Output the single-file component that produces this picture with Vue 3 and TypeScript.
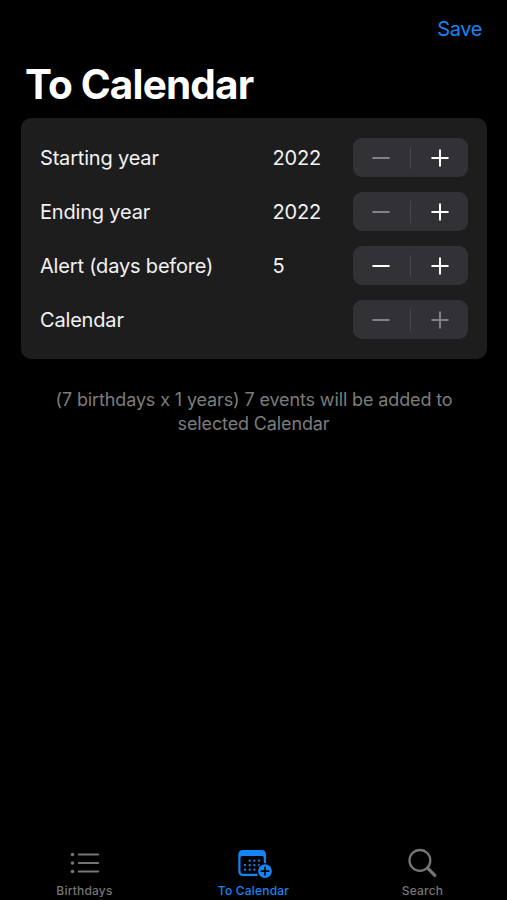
<script setup lang="ts">
import { computed, reactive, ref } from 'vue'

interface Row {
  label: string
  value: number | null
  min: number
}

const rows = reactive<Row[]>([
  { label: 'Starting year', value: 2022, min: 2022 },
  { label: 'Ending year', value: 2022, min: 2022 },
  { label: 'Alert (days before)', value: 5, min: 0 },
  { label: 'Calendar', value: null, min: 0 },
])

const birthdays = 7
const years = computed(() => (rows[1].value ?? 0) - (rows[0].value ?? 0) + 1)
const active = ref('To Calendar')

function canDecrease(row: Row): boolean {
  return row.value !== null && row.value > row.min
}

function step(row: Row, delta: number): void {
  if (row.value !== null) row.value += delta
}
</script>

<template>
  <div class="screen">
    <header class="nav">
      <button class="save">Save</button>
    </header>
    <h1 class="title">To Calendar</h1>

    <section class="card">
      <div v-for="row in rows" :key="row.label" class="row">
        <span class="label">{{ row.label }}</span>
        <span class="value">{{ row.value }}</span>
        <div class="stepper">
          <button class="step" :disabled="!canDecrease(row)" aria-label="Decrease" @click="step(row, -1)">
            <svg class="glyph" viewBox="0 0 18 18"><path d="M1.2 9H16.8" /></svg>
          </button>
          <span class="divider"></span>
          <button class="step" :disabled="row.value === null" aria-label="Increase" @click="step(row, 1)">
            <svg class="glyph" viewBox="0 0 18 18"><path d="M1.2 9H16.8M9 1.2V16.8" /></svg>
          </button>
        </div>
      </div>
    </section>

    <p class="note">
      <span class="line first">({{ birthdays }} birthdays x {{ years }} years) {{ birthdays * years }} events will be added to</span>
      <span class="line">selected Calendar</span>
    </p>

    <nav class="tabs">
      <button class="tab" :class="{ on: active === 'Birthdays' }" @click="active = 'Birthdays'">
        <svg class="icon" viewBox="0 0 36 32">
          <g fill="currentColor">
            <circle cx="5.5" cy="7.5" r="1.8" />
            <circle cx="5.5" cy="16" r="1.8" />
            <circle cx="5.5" cy="24.5" r="1.8" />
          </g>
          <path d="M11.8 7.5H31.2M11.8 16H31.2M11.8 24.5H31.2" fill="none" stroke="currentColor" stroke-width="2" stroke-linecap="round" />
        </svg>
        <span class="caption">Birthdays</span>
      </button>
      <button class="tab" :class="{ on: active === 'To Calendar' }" @click="active = 'To Calendar'">
        <svg class="icon" viewBox="0 0 36 32">
          <path
            fill="currentColor"
            fill-rule="evenodd"
            d="M7 3H25.3Q30 3 30 7.7V18.2A7.8 7.8 0 0 0 27.8 17.2V10.6Q27.8 9 26.2 9H6.1Q4.5 9 4.5 10.6V23.9Q4.5 26.8 7.4 26.8H21A7.8 7.8 0 0 0 22.2 29H7Q2.3 29 2.3 24.3V7.7Q2.3 3 7 3Z"
          />
          <g fill="currentColor">
            <circle cx="13.7" cy="13.7" r="1.15" /><circle cx="18.4" cy="13.7" r="1.15" /><circle cx="23.1" cy="13.7" r="1.15" />
            <circle cx="9" cy="18.2" r="1.15" /><circle cx="13.7" cy="18.2" r="1.15" /><circle cx="18.4" cy="18.2" r="1.15" /><circle cx="23.1" cy="18.2" r="1.15" />
            <circle cx="9" cy="22.7" r="1.15" /><circle cx="13.7" cy="22.7" r="1.15" /><circle cx="18.4" cy="22.7" r="1.15" />
          </g>
          <circle cx="29" cy="24.1" r="8.1" fill="#000" />
          <circle cx="29" cy="24.1" r="6.9" fill="currentColor" />
          <path d="M25.3 24.1H32.7M29 20.4V27.8" fill="none" stroke="#000" stroke-width="1.7" stroke-linecap="round" />
        </svg>
        <span class="caption">To Calendar</span>
      </button>
      <button class="tab" :class="{ on: active === 'Search' }" @click="active = 'Search'">
        <svg class="icon" viewBox="0 0 36 32">
          <circle cx="14.9" cy="13.4" r="10.4" fill="none" stroke="currentColor" stroke-width="2.3" />
          <path d="M22.5 21L29.8 28.3" fill="none" stroke="currentColor" stroke-width="3.2" stroke-linecap="round" />
        </svg>
        <span class="caption">Search</span>
      </button>
    </nav>
  </div>
</template>

<style>
body {
  background: #000;
}
</style>

<style scoped>
.screen {
  box-sizing: border-box;
  display: flex;
  flex-direction: column;
  height: 900px;
  overflow: hidden;
  background: #000;
  color: #f2f2f3;
  font-family: Inter, "Liberation Sans", sans-serif;
}

button {
  margin: 0;
  padding: 0;
  border: 0;
  background: none;
  font: inherit;
  color: inherit;
}

.nav {
  display: flex;
  justify-content: flex-end;
  align-items: center;
  height: 57px;
  padding-right: 25px;
}

.save {
  color: #1485f5;
  font-size: 20px;
  letter-spacing: -0.4px;
}

.title {
  margin: 0;
  padding-left: 25px;
  height: 61px;
  color: #fff;
  font-size: 40.5px;
  line-height: 55px;
  font-weight: 700;
  letter-spacing: -0.85px;
}

.card {
  display: flex;
  flex-direction: column;
  gap: 15px;
  margin: 0 20px 0 20.5px;
  padding: 20px 19.5px;
  border-radius: 10px;
  background: #1d1d1e;
}

.row {
  display: flex;
  align-items: center;
  height: 39.2px;
  font-size: 20px;
}

.row + .row {
  margin-top: -0.2px;
}

.label {
  width: 232.5px;
  letter-spacing: -0.18px;
}

.value {
  flex: 1;
  letter-spacing: -0.2px;
}

.stepper {
  display: flex;
  align-items: center;
  width: 114.5px;
  height: 39px;
  border-radius: 9px;
  background: #323236;
}

.step {
  display: flex;
  flex: 1;
  align-items: center;
  justify-content: center;
  height: 100%;
  color: #fff;
}

.step:first-child {
  padding-right: 1px;
}

.step:last-child {
  padding-left: 1px;
}

.step:disabled {
  color: #828286;
}

.glyph {
  width: 18px;
  height: 18px;
  fill: none;
  stroke: currentColor;
  stroke-width: 2;
  stroke-linecap: round;
}

.divider {
  width: 1px;
  height: 22px;
  background: #47474b;
}

.note {
  display: flex;
  flex-direction: column;
  align-items: center;
  margin: 28.5px 0 0;
  color: #7c7c7c;
  font-size: 18px;
  line-height: 24.5px;
  letter-spacing: -0.13px;
}

.line {
  white-space: nowrap;
}

.first {
  padding-left: 1px;
}

.tabs {
  display: grid;
  grid-template-columns: repeat(3, 1fr);
  margin-top: auto;
  height: 53px;
}

.tab {
  display: flex;
  flex-direction: column;
  align-items: center;
  color: #757575;
}

.on {
  color: #1485f5;
}

.icon {
  width: 36px;
  height: 32px;
}

.caption {
  margin-top: 4px;
  font-size: 12px;
  line-height: 16px;
  font-weight: 500;
  letter-spacing: 0.2px;
  white-space: nowrap;
}
</style>
